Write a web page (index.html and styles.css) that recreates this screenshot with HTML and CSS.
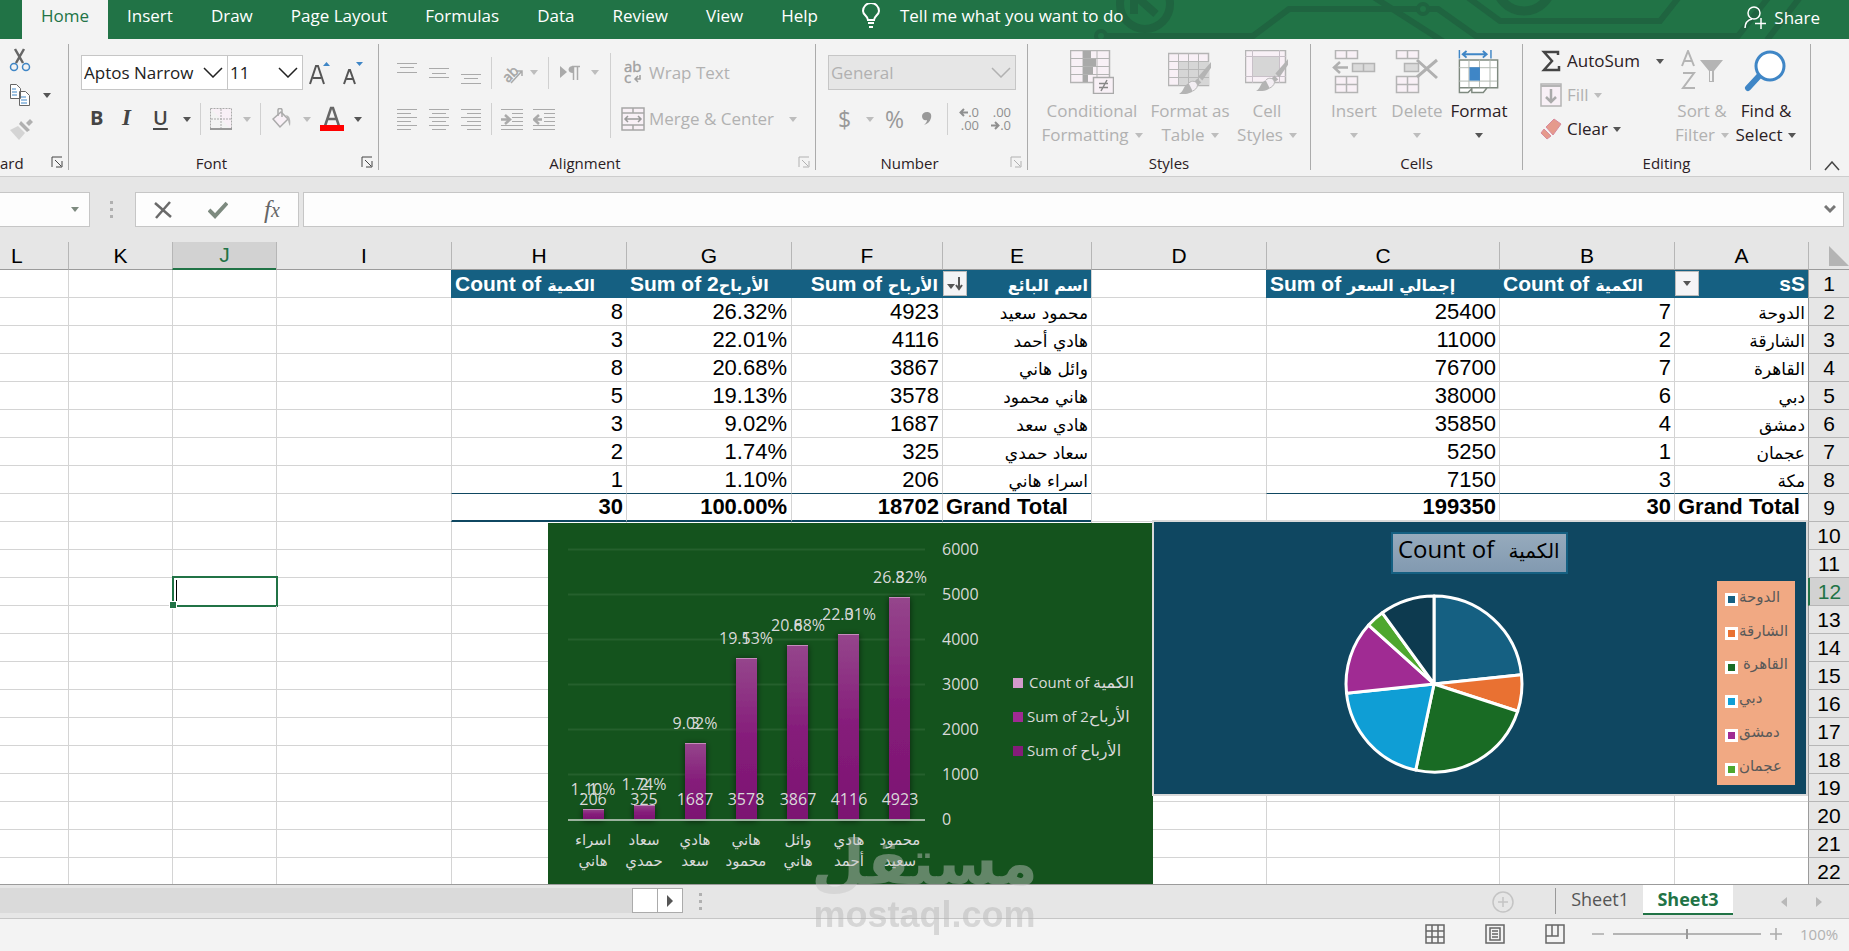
FILE: index.html
```html
<!DOCTYPE html>
<html lang="en">
<head>
<meta charset="utf-8">
<title>Sheet3 - Excel</title>
<link rel="stylesheet" href="styles.css">
</head>
<body>
<svg class="defs" aria-hidden="true">
  <symbol id="caret" viewBox="0 0 8 5"><path d="M0 0h8L4 5z" fill="currentColor"/></symbol>
  <symbol id="launch" viewBox="0 0 12 12"><path d="M1 11V1h10M4 4l6 6M11 5v6H5" fill="none" stroke="currentColor"/></symbol>
  <symbol id="chev" viewBox="0 0 20 11"><path d="M1 1l9 9 9-9" fill="none" stroke="currentColor" stroke-width="1.500"/></symbol>
  <symbol id="brush" viewBox="0 0 34 34"><path d="M33 0L20 15l4 4L33 6z" fill="#b4b4b4"/><path d="M19 17l-3 3 3 4 4-3z" fill="#b4b4b4"/><path d="M0 33c5-2 5-11 11-11 4 0 6 4 4 7-3 4-9 4-15 4z" fill="#b4b4b4"/><path d="M10 22c3-4 9-2 9 2 0 3-3 5-5 6" fill="#f3eef3" stroke="#b4b4b4"/></symbol>
</svg>

<header class="topbar">
  <svg class="circuit" width="760" height="39" viewBox="1089 0 760 39" fill="none" stroke="#1f6440" stroke-width="6" aria-hidden="true">
    <circle cx="1145" cy="4" r="25" stroke-width="8"/><path d="M1134-4v18M1138-2l18 16" stroke-width="8"/>
    <circle cx="1101" cy="36" r="5" stroke-width="4"/>
    <path d="M1106 36h147l36-27h128M1429 9h9l38 27h262l30-38M1372-4l72 46M1466-4l34 25h160l19-24M1767 40l34-44"/>
    <circle cx="1423" cy="9" r="5" stroke-width="4"/><circle cx="1524" cy="-17" r="28" stroke-width="9"/>
  </svg>
  <nav class="tabs">
    <button class="tab tab-on">Home</button><button class="tab">Insert</button><button class="tab">Draw</button><button class="tab">Page Layout</button><button class="tab">Formulas</button><button class="tab">Data</button><button class="tab">Review</button><button class="tab">View</button><button class="tab">Help</button>
  </nav>
  <button class="tell">
    <svg width="18" height="26" viewBox="0 0 18 26" fill="none" stroke="#fff" stroke-width="2"><path d="M6 17c0-4-5-5-5-9a8 8 0 0 1 16 0c0 4-5 5-5 9zM6 20h6M7 24h4"/></svg>
    Tell me what you want to do</button>
  <button class="share">
    <svg width="22" height="24" viewBox="0 0 22 24" fill="none" stroke="#fff" stroke-width="1.500"><circle cx="10" cy="7" r="6"/><path d="M1 22c0-5 3-8 7-9M17 12v11M11 17.500h11"/></svg>
    Share</button>
</header>

<section class="ribbon">
  <div class="group g-clip">
    <div class="body clip-rows">
      <button aria-label="Cut"><svg width="22" height="24" viewBox="0 0 22 24" fill="none"><path d="M6 1l8 14M15 1L7 15" stroke="#666" stroke-width="2.500"/><circle cx="5" cy="19" r="3.500" stroke="#3f86c6" stroke-width="1.500"/><circle cx="17" cy="19" r="3.500" stroke="#3f86c6" stroke-width="1.500"/></svg></button>
      <button aria-label="Copy"><svg width="22" height="24" viewBox="0 0 22 24" fill="#fff" stroke="#666"><path d="M1.500 1.500h6l4 4v10h-10zM10.500 8.500h6l4 4v10h-10z"/><path d="M3 6h4M3 9h5M3 12h5M12 14h5M12 17h6M12 20h6" stroke="#3f86c6"/></svg><svg class="c dark"><use href="#caret"/></svg></button>
      <button aria-label="Format Painter"><svg width="24" height="22" viewBox="0 0 24 22"><path d="M1 11l8-4 7 7-6 7z" fill="#d4d4d4"/><path d="M10 5l8 8 3-2-9-9zM17 4l4-4 3 3-4 4z" fill="#b0b0b0"/></svg></button>
    </div>
    <div class="foot"><span class="cut-label">ard</span><button class="launch dark" aria-label="Clipboard settings"><svg><use href="#launch"/></svg></button></div>
  </div>

  <div class="group g-font">
    <div class="body two-rows">
      <div class="row row-top">
        <label class="combo w-name"><select aria-label="Font"><option>Aptos Narrow</option></select><svg class="chev"><use href="#chev"/></svg></label>
        <label class="combo w-size"><select aria-label="Font size"><option>11</option></select><svg class="chev"><use href="#chev"/></svg></label>
        <button class="grow" aria-label="Increase font size"><svg width="22" height="24" viewBox="0 0 22 24"><path d="M1 23L7 5h2l6 18M4 17h8" fill="none" stroke="#555" stroke-width="2"/><path d="M14 5l3.500-4L21 5z" fill="#3f86c6"/></svg></button>
        <button class="grow" aria-label="Decrease font size"><svg width="22" height="24" viewBox="0 0 22 24"><path d="M2 23L7 9h1l5 14M4 18h7" fill="none" stroke="#555" stroke-width="2"/><path d="M14 1l3.500 4L21 1z" fill="#3f86c6"/></svg></button>
      </div>
      <div class="row font-row">
        <button class="b">B</button><button class="i">I</button><button class="u">U</button><svg class="c dark"><use href="#caret"/></svg><i class="sep"></i>
        <button aria-label="Borders"><svg width="22" height="22" viewBox="0 0 22 22"><path d="M.5.5h21v21M.5.5v21M11 1v20M1 11h20" fill="#f8f0f6" stroke="#aaa" stroke-dasharray="2 1"/><path d="M0 21h22" stroke="#999" stroke-width="2"/></svg></button><svg class="c"><use href="#caret"/></svg><i class="sep"></i>
        <button aria-label="Fill colour"><svg width="20" height="22" viewBox="0 0 20 22"><path d="M1 11L9 4l7 7-8 8z" fill="#f8f0f6" stroke="#aaa" stroke-width="1.500"/><path d="M6 8V2c0-2 4-2 4 0v7" fill="none" stroke="#aaa" stroke-width="1.500"/><path d="M14 7c4 1 5 5 4 11-2-3-1-5-4-11z" fill="#b4b4b4"/></svg></button><svg class="c"><use href="#caret"/></svg>
        <button aria-label="Font colour"><svg width="24" height="26" viewBox="0 0 24 26"><path d="M5 20L11 2h2l6 18M8 13h8" fill="none" stroke="#666" stroke-width="2.500"/><path d="M0 19h24v6H0z" fill="red"/></svg></button><svg class="c dark"><use href="#caret"/></svg>
      </div>
    </div>
    <div class="foot"><span>Font</span><button class="launch dark" aria-label="Font settings"><svg><use href="#launch"/></svg></button></div>
  </div>

  <div class="group g-align off">
    <div class="body align-body">
      <div class="two-rows">
        <div class="row row-top align-top">
          <button aria-label="Top align"><svg class="ln" viewBox="0 0 20 24"><path d="M0 2.500h20M3 6.500h14M0 11.500h20"/></svg></button>
          <button aria-label="Middle align"><svg class="ln" viewBox="0 0 20 24"><path d="M0 7.500h20M3 12.500h14M0 16.500h20"/></svg></button>
          <button aria-label="Bottom align"><svg class="ln" viewBox="0 0 20 24"><path d="M0 13.500h20M3 17.500h14M0 22.500h20"/></svg></button>
          <i class="sep"></i>
          <button aria-label="Orientation"><svg class="loose" width="22" height="22" viewBox="0 0 22 22"><text x="0" y="17" font-size="14" fill="#a6a6a6" stroke="#a6a6a6" stroke-width=".5" transform="rotate(-45 8 12)">ab</text><path d="M9 21L20 9M14 9h6v5" fill="none" stroke="#aaa" stroke-width="1.500"/></svg></button><svg class="c"><use href="#caret"/></svg>
          <i class="sep"></i>
          <button aria-label="Text direction"><svg width="20" height="16" viewBox="0 0 20 16"><path d="M0 1l7 6-7 6z" fill="#aaa"/><path d="M13.500 1v14M17.500 1v14M20 1.500h-8" fill="none" stroke="#aaa" stroke-width="1.500"/><path d="M13 1c-6 0-6 7 0 7z" fill="#aaa"/></svg></button><svg class="c"><use href="#caret"/></svg>
        </div>
        <div class="row align-low">
          <button aria-label="Align left"><svg class="ln" viewBox="0 0 20 24"><path d="M0 2.500h20M0 6.500h14M0 10.500h20M0 14.500h14M0 18.500h20M0 22.500h14"/></svg></button>
          <button aria-label="Centre"><svg class="ln" viewBox="0 0 20 24"><path d="M0 2.500h20M3 6.500h14M0 10.500h20M3 14.500h14M0 18.500h20M3 22.500h14"/></svg></button>
          <button aria-label="Align right"><svg class="ln" viewBox="0 0 20 24"><path d="M0 2.500h20M6 6.500h14M0 10.500h20M6 14.500h14M0 18.500h20M6 22.500h14"/></svg></button>
          <i class="sep"></i>
          <button aria-label="Decrease indent"><svg width="22" height="24" viewBox="0 0 22 24"><path d="M0 2.500h22M11 6.500h11M11 10.500h11M11 14.500h11M0 18.500h22M0 22.500h22" stroke="#aaa"/><path d="M0 12.500h8M4 8l5 4.500L4 17" fill="none" stroke="#aaa" stroke-width="2.500"/></svg></button>
          <button aria-label="Increase indent"><svg width="22" height="24" viewBox="0 0 22 24"><path d="M0 2.500h22M11 6.500h11M11 10.500h11M11 14.500h11M0 18.500h22M0 22.500h22" stroke="#aaa"/><path d="M9 12.500H2M6 8l-5 4.500L6 17" fill="none" stroke="#aaa" stroke-width="2.500"/></svg></button>
        </div>
      </div>
      <i class="sep sep-tall"></i>
      <div class="two-rows wrap-col">
        <button class="row row-top"><svg class="loose" width="24" height="26" viewBox="0 0 24 26"><text x="3" y="12" font-size="15" fill="#a0a0a0" stroke="#a0a0a0" stroke-width=".4">ab</text><text x="3" y="23" font-size="15" fill="#a0a0a0" stroke="#a0a0a0" stroke-width=".4">c</text><path d="M19 15v4h-5M17 16l-3 3 3 3" fill="none" stroke="#a0a0a0" stroke-width="1.500"/></svg>Wrap Text</button>
        <button class="row"><svg width="24" height="24" viewBox="0 0 24 24"><path d="M1 1h22v22H1zM1 6h22M1 18h22M12 1v5M12 18v5" fill="#f8f0f6" stroke="#a6a6a6" stroke-width="1.500"/><path d="M4 12h16M7 9l-3 3 3 3M17 9l3 3-3 3" fill="none" stroke="#999" stroke-width="1.500"/></svg>Merge &amp; Center<svg class="c merge-c"><use href="#caret"/></svg></button>
      </div>
    </div>
    <div class="foot"><span>Alignment</span><button class="launch" aria-label="Alignment settings"><svg><use href="#launch"/></svg></button></div>
  </div>

  <div class="group g-num off">
    <div class="body two-rows">
      <div class="row row-top"><label class="combo combo-off"><select aria-label="Number format"><option>General</option></select><svg class="chev"><use href="#chev"/></svg></label></div>
      <div class="row num-row">
        <button class="sym">$</button><svg class="c"><use href="#caret"/></svg><button class="sym">%</button>
        <button aria-label="Comma style"><svg width="10" height="14" viewBox="0 0 10 14"><path d="M5 0c3 0 5 2 4 6-1 4-4 6-7 7 2-2 3-3 3-5-3 1-5-1-5-4 0-2 2-4 5-4z" fill="#999"/></svg></button>
        <i class="sep"></i>
        <button class="dec"><span><svg width="9" height="9" viewBox="0 0 9 9"><path d="M9 4.500H2M5 1L1.500 4.500 5 8" fill="none" stroke="currentColor" stroke-width="2"/></svg>.0</span><span>.00</span></button>
        <button class="dec"><span>.00</span><span><svg width="9" height="9" viewBox="0 0 9 9"><path d="M0 4.500h7M4 1l3.500 3.500L4 8" fill="none" stroke="currentColor" stroke-width="2"/></svg>.0</span></button>
      </div>
    </div>
    <div class="foot"><span>Number</span><button class="launch" aria-label="Number settings"><svg><use href="#launch"/></svg></button></div>
  </div>

  <div class="group g-styles off">
    <div class="body bigs styles-cols">
      <button class="big"><svg width="44" height="44" viewBox="0 0 44 44"><path d="M.5.5h39v32H.5z" fill="#f8f0f6" stroke="#b4b4b4" stroke-width="1.500"/><path d="M13 0v33M27 0v33M0 8.500h40M0 16.500h40M0 24.500h40" stroke="#b4b4b4"/><path d="M13 1h8v7h-8zM13 9h13v7H13zM13 17h10v7H13zM13 25h5v7h-5z" fill="#a9a9a9"/><path d="M23.500 27.500h20v16h-20z" fill="#f8f0f6" stroke="#aaa" stroke-width="1.500"/><path d="M29 33.500h9M29 37.500h9M37 30l-6 11" stroke="#888" stroke-width="1.500"/></svg>Conditional<span>Formatting <svg class="c"><use href="#caret"/></svg></span></button>
      <button class="big"><svg width="44" height="44" viewBox="0 0 44 44"><path d="M.5 3.500h40v32H.5z" fill="#f8f0f6" stroke="#b4b4b4" stroke-width="1.500"/><path d="M10 11h31v24H10z" fill="#d6d6d6"/><path d="M10.500 3v33M20.500 3v33M30.500 3v33M0 11.500h41M0 19.500h41M0 27.500h41" stroke="#b8b8b8"/><use href="#brush" x="11" y="12" width="33" height="33"/></svg>Format as<span>Table <svg class="c"><use href="#caret"/></svg></span></button>
      <button class="big"><svg width="44" height="44" viewBox="0 0 44 44"><path d="M.5.5h40v32H.5z" fill="#f8f0f6" stroke="#b4b4b4" stroke-width="1.500"/><path d="M8 7h26v19H8z" fill="#d6d6d6"/><path d="M7.500 0v33M34.500 0v33M0 6.500h41M0 26.500h41" stroke="#c8c0c8"/><use href="#brush" x="11" y="9" width="33" height="33"/></svg>Cell<span>Styles <svg class="c"><use href="#caret"/></svg></span></button>
    </div>
    <div class="foot"><span>Styles</span></div>
  </div>

  <div class="group g-cells">
    <div class="body bigs cells-cols">
      <button class="big off"><svg width="44" height="44" viewBox="0 0 44 44"><path d="M3.500.500h22v8h-22zM14.500.5v8M3.500 26.500h22v16h-22zM14.500 26.500v16M3.500 34.500h22" fill="#f8f0f6" stroke="#b4b4b4" stroke-width="1.500"/><path d="M20.500 13.500h22v8h-22zM31.500 13.500v8" fill="#dadada" stroke="#b4b4b4" stroke-width="1.500"/><path d="M16 17.500H2M8 12l-6 5.500 6 5.500" fill="none" stroke="#b0b0b0" stroke-width="2.500"/></svg>Insert<span><svg class="c"><use href="#caret"/></svg></span></button>
      <button class="big off"><svg width="44" height="44" viewBox="0 0 44 44"><path d="M1.500.500h22v8h-22zM12.500.5v8M1.500 26.500h22v16h-22zM12.500 26.500v16M1.500 34.500h22" fill="#f8f0f6" stroke="#b4b4b4" stroke-width="1.500"/><path d="M9.500 13.500h14v8h-14z" fill="#dadada" stroke="#b4b4b4" stroke-width="1.500"/><path d="M22 10l20 18M42 10L22 27" stroke="#b0b0b0" stroke-width="3"/></svg>Delete<span><svg class="c"><use href="#caret"/></svg></span></button>
      <button class="big"><svg width="44" height="46" viewBox="0 0 44 46"><path d="M1.500 10.500h40v29h-40zM1.500 39.500v5h9l4-4v4h12l4-5" fill="#fff" stroke="#7f8a80" stroke-width="1.500"/><path d="M11.500 10v29M22.500 10v29M33.500 10v29M1 18.500h40M1 32.500h40" stroke="#b0b8b0"/><path d="M12 18h11v14H12z" fill="#3f86c6"/><path d="M1.500 0v9M34.500 0v9" stroke="#3f86c6" stroke-width="1.500"/><path d="M5 4.500h25M9 1L5 4.500 9 8M26 1l4 3.500L26 8" fill="none" stroke="#3f86c6" stroke-width="2"/></svg>Format<span class="dark"><svg class="c"><use href="#caret"/></svg></span></button>
    </div>
    <div class="foot"><span>Cells</span></div>
  </div>

  <div class="group g-edit">
    <div class="body edit-body">
      <div class="edit-list">
        <button><svg width="22" height="22" viewBox="0 0 22 22"><path d="M18 5V2H4l8 9-8 9h15v-4" fill="none" stroke="#444" stroke-width="2.500"/></svg>AutoSum<svg class="c dark auto-c"><use href="#caret"/></svg></button>
        <button class="off"><svg width="22" height="24" viewBox="0 0 22 24"><path d="M1 1h20v22H1z" fill="#f8f0f6" stroke="#b4b4b4" stroke-width="1.500"/><path d="M1 3h20" stroke="#b4b4b4" stroke-width="2"/><path d="M11 6v13M6 14l5 5 5-5" fill="none" stroke="#aaa" stroke-width="2.500"/></svg>Fill<svg class="c"><use href="#caret"/></svg></button>
        <button><svg width="22" height="22" viewBox="0 0 22 22"><path d="M6 9l8-8 7 5-8 11z" fill="#e59a8c" stroke="#d98a9c"/><path d="M4 11l7 7-4 3-6-6z" fill="#e59a8c" stroke="#d98a9c"/></svg>Clear<svg class="c dark"><use href="#caret"/></svg></button>
      </div>
      <button class="big off"><svg width="44" height="44" viewBox="0 0 44 44"><path d="M2 16L8 1l6 15M4 11h8M3 23h11L3 38h12" fill="none" stroke="#b4b4b4" stroke-width="2"/><path d="M20 10h23l-9 11v11h-5V21z" fill="#b4b4b4"/><path d="M30 21h2v10h-2z" fill="#f3f3f3"/></svg>Sort &amp;<span>Filter <svg class="c"><use href="#caret"/></svg></span></button>
      <button class="big"><svg width="44" height="44" viewBox="0 0 44 44"><path d="M16 25L4 38" stroke="#3f86c6" stroke-width="6" stroke-linecap="round"/><circle cx="26" cy="16" r="14" fill="#fff" stroke="#3f86c6" stroke-width="3"/></svg>Find &amp;<span>Select <svg class="c dark"><use href="#caret"/></svg></span></button>
    </div>
    <div class="foot"><span>Editing</span></div>
  </div>
  <button class="collapse" aria-label="Collapse ribbon"><svg width="16" height="10" viewBox="0 0 16 10"><path d="M1 9l7-8 7 8" fill="none" stroke="#444" stroke-width="1.500"/></svg></button>
</section>

<section class="formula">
  <label class="namebox"><input type="text" aria-label="Name box"><svg class="c"><use href="#caret"/></svg></label>
  <span class="dots"><i></i><i></i><i></i></span>
  <div class="fx-tools">
    <button aria-label="Cancel"><svg width="18" height="18" viewBox="0 0 18 18"><path d="M1 2l16 14M16 1L2 17" stroke="#6a6a6a" stroke-width="2.500"/></svg></button>
    <button aria-label="Enter"><svg width="20" height="18" viewBox="0 0 20 18"><path d="M1 9l6 6L19 2" fill="none" stroke="#7d8a7f" stroke-width="4"/></svg></button>
    <button class="fx" aria-label="Insert function">f<small>x</small></button>
  </div>
  <div class="fx-input"><input type="text" aria-label="Formula"><svg width="12" height="9" viewBox="0 0 12 9"><path d="M1 1l5 5 5-5" fill="none" stroke="#777" stroke-width="3"/></svg></div>
</section>

<main class="sheet">
  <table class="grid" dir="rtl">
    <colgroup><col class="w-head"><col class="w-a"><col class="w-b"><col class="w-c"><col class="w-b"><col class="w-e"><col class="w-f"><col class="w-g"><col class="w-b"><col class="w-b"><col class="w-j"><col class="w-j"><col></colgroup>
    <thead><tr><th class="corner"><svg width="20" height="20" viewBox="0 0 20 20"><path d="M0 0v20h20z" fill="#b4b4b4"/></svg></th><th>A</th><th>B</th><th>C</th><th>D</th><th>E</th><th>F</th><th>G</th><th>H</th><th>I</th><th class="sel">J</th><th>K</th><th class="last">L</th></tr></thead>
    <tbody>
      <tr class="heads"><th>1</th><td class="hd">sS<button class="filter" aria-label="Filter"><svg class="c"><use href="#caret"/></svg></button></td><td class="hd lt" dir="ltr">Count of <bdi>الكمية</bdi></td><td class="hd lt" dir="ltr">Sum of <bdi>إجمالي السعر</bdi></td><td></td><td class="hd"><bdi>اسم البائع</bdi><button class="filter" aria-label="Sorted"><svg width="16" height="14" viewBox="0 0 16 14"><path d="M0 7h8l-4 5z" fill="#555"/><path d="M12 0v12M9 8l3 4 3-4" fill="none" stroke="#555" stroke-width="2"/></svg></button></td><td class="hd rt" dir="ltr">Sum of <bdi>الأرباح</bdi></td><td class="hd lt" dir="ltr">Sum of <span class="ar">الأرباح</span>2</td><td class="hd lt" dir="ltr">Count of <bdi>الكمية</bdi></td><td></td><td></td><td></td><td></td></tr>
      <tr><th>2</th><td><bdi>الدوحة</bdi></td><td>7</td><td>25400</td><td></td><td><bdi>محمود سعيد</bdi></td><td>4923</td><td dir="ltr" class="rt">26.32%</td><td>8</td><td></td><td></td><td></td><td></td></tr>
      <tr><th>3</th><td><bdi>الشارقة</bdi></td><td>2</td><td>11000</td><td></td><td><bdi>هادي أحمد</bdi></td><td>4116</td><td dir="ltr" class="rt">22.01%</td><td>3</td><td></td><td></td><td></td><td></td></tr>
      <tr><th>4</th><td><bdi>القاهرة</bdi></td><td>7</td><td>76700</td><td></td><td><bdi>وائل هاني</bdi></td><td>3867</td><td dir="ltr" class="rt">20.68%</td><td>8</td><td></td><td></td><td></td><td></td></tr>
      <tr><th>5</th><td><bdi>دبي</bdi></td><td>6</td><td>38000</td><td></td><td><bdi>هاني محمود</bdi></td><td>3578</td><td dir="ltr" class="rt">19.13%</td><td>5</td><td></td><td></td><td></td><td></td></tr>
      <tr><th>6</th><td><bdi>دمشق</bdi></td><td>4</td><td>35850</td><td></td><td><bdi>هادي سعد</bdi></td><td>1687</td><td dir="ltr" class="rt">9.02%</td><td>3</td><td></td><td></td><td></td><td></td></tr>
      <tr><th>7</th><td><bdi>عجمان</bdi></td><td>1</td><td>5250</td><td></td><td><bdi>سعاد حمدي</bdi></td><td>325</td><td dir="ltr" class="rt">1.74%</td><td>2</td><td></td><td></td><td></td><td></td></tr>
      <tr class="pre-total"><th>8</th><td class="t"><bdi>مكة</bdi></td><td class="t">3</td><td class="t">7150</td><td></td><td class="t"><bdi>اسراء هاني</bdi></td><td class="t">206</td><td dir="ltr" class="t rt">1.10%</td><td class="t">1</td><td></td><td></td><td></td><td></td></tr>
      <tr class="total"><th>9</th><td class="t lt" dir="ltr">Grand Total</td><td class="t">30</td><td class="t">199350</td><td></td><td class="t lt" dir="ltr">Grand Total</td><td class="t">18702</td><td dir="ltr" class="t rt">100.00%</td><td class="t">30</td><td></td><td></td><td></td><td></td></tr>
      <tr><th>10</th><td></td><td></td><td></td><td></td><td></td><td></td><td></td><td></td><td></td><td></td><td></td><td></td></tr>
      <tr><th>11</th><td></td><td></td><td></td><td></td><td></td><td></td><td></td><td></td><td></td><td></td><td></td><td></td></tr>
      <tr><th class="sel">12</th><td></td><td></td><td></td><td></td><td></td><td></td><td></td><td></td><td></td><td class="active"><span class="cursor"></span></td><td></td><td></td></tr>
      <tr><th>13</th><td></td><td></td><td></td><td></td><td></td><td></td><td></td><td></td><td></td><td></td><td></td><td></td></tr>
      <tr><th>14</th><td></td><td></td><td></td><td></td><td></td><td></td><td></td><td></td><td></td><td></td><td></td><td></td></tr>
      <tr><th>15</th><td></td><td></td><td></td><td></td><td></td><td></td><td></td><td></td><td></td><td></td><td></td><td></td></tr>
      <tr><th>16</th><td></td><td></td><td></td><td></td><td></td><td></td><td></td><td></td><td></td><td></td><td></td><td></td></tr>
      <tr><th>17</th><td></td><td></td><td></td><td></td><td></td><td></td><td></td><td></td><td></td><td></td><td></td><td></td></tr>
      <tr><th>18</th><td></td><td></td><td></td><td></td><td></td><td></td><td></td><td></td><td></td><td></td><td></td><td></td></tr>
      <tr><th>19</th><td></td><td></td><td></td><td></td><td></td><td></td><td></td><td></td><td></td><td></td><td></td><td></td></tr>
      <tr><th>20</th><td></td><td></td><td></td><td></td><td></td><td></td><td></td><td></td><td></td><td></td><td></td><td></td></tr>
      <tr><th>21</th><td></td><td></td><td></td><td></td><td></td><td></td><td></td><td></td><td></td><td></td><td></td><td></td></tr>
      <tr><th>22</th><td></td><td></td><td></td><td></td><td></td><td></td><td></td><td></td><td></td><td></td><td></td><td></td></tr>
    </tbody>
  </table>

  <svg class="chart chart-bars" width="605" height="380" viewBox="0 0 605 380" role="img" aria-label="Sales by seller">
    <defs>
      <linearGradient id="bar" x1="0" y1="0" x2="0" y2="1"><stop offset="0" stop-color="#95468c"/><stop offset=".5" stop-color="#851c7a"/><stop offset="1" stop-color="#7c1572"/></linearGradient>
      <filter id="sh" x="-50%" y="-20%" width="200%" height="140%"><feDropShadow dx="0" dy="1" stdDeviation="3" flood-opacity=".6"/></filter>
    </defs>
    <rect width="605" height="380" fill="#14531d"/>
    <path d="M20 26.500h357M20 71.500h357M20 116.500h357M20 161.500h357M20 206.500h357M20 251.500h357" stroke="#25602d" stroke-width="2"/>
    <g fill="url(#bar)" filter="url(#sh)"><rect x="35" y="286" width="21" height="11"/><rect x="86" y="282" width="21" height="15"/><rect x="137" y="220" width="21" height="77"/><rect x="188" y="135" width="21" height="162"/><rect x="239" y="122" width="21" height="175"/><rect x="290" y="111" width="21" height="186"/><rect x="341" y="74" width="21" height="223"/></g>
    <path d="M35 286.500h21M86 282.500h21M137 220.500h21M188 135.500h21M239 122.500h21M290 111.500h21M341 74.500h21" stroke="#c58cbc"/>
    <path d="M20 297h357" stroke="#9cb39f" stroke-width="2"/>
    <g class="lab num">
      <text x="394" y="32">6000</text><text x="394" y="77">5000</text><text x="394" y="122">4000</text><text x="394" y="167">3000</text><text x="394" y="212">2000</text><text x="394" y="257">1000</text><text x="394" y="302">0</text>
    </g>
    <g class="lab num mid">
      <text x="45" y="272">1.10%</text><text x="45" y="272">1</text><text x="96" y="267">1.74%</text><text x="96" y="267">2</text><text x="147" y="206">9.02%</text><text x="147" y="206">3</text><text x="198" y="121">19.13%</text><text x="198" y="121">5</text><text x="250" y="108">20.68%</text><text x="250" y="108">8</text><text x="301" y="97">22.01%</text><text x="301" y="97">3</text><text x="352" y="60">26.32%</text><text x="352" y="60">8</text>
      <text x="45" y="282">206</text><text x="96" y="282">325</text><text x="147" y="282">1687</text><text x="198" y="282">3578</text><text x="250" y="282">3867</text><text x="301" y="282">4116</text><text x="352" y="282">4923</text>
    </g>
    <g class="lab mid cat">
      <text x="45" y="322">اسراء</text><text x="45" y="343">هاني</text><text x="96" y="322">سعاد</text><text x="96" y="343">حمدي</text><text x="147" y="322">هادي</text><text x="147" y="343">سعد</text><text x="198" y="322">هاني</text><text x="198" y="343">محمود</text><text x="250" y="322">وائل</text><text x="250" y="343">هاني</text><text x="301" y="322">هادي</text><text x="301" y="343">أحمد</text><text x="352" y="322">محمود</text><text x="352" y="343">سعيد</text>
    </g>
    <rect x="465" y="155" width="10" height="10" fill="#d39acb"/><rect x="465" y="189" width="10" height="10" fill="#a02b93"/><rect x="465" y="223" width="10" height="10" fill="#851c7a"/>
    <g class="lab"><text x="481" y="165">Count of <tspan class="ar">الكمية</tspan></text><text x="479" y="199">Sum of <tspan class="ar">الأرباح</tspan>2</text><text x="479" y="233">Sum of <tspan class="ar">الأرباح</tspan></text></g>
  </svg>

  <svg class="chart chart-pie" width="656" height="276" viewBox="0 0 656 276" role="img" aria-label="Count by city">
    <defs><linearGradient id="tb" x1="0" y1="0" x2="0" y2="1"><stop offset="0" stop-color="#97abbd"/><stop offset="1" stop-color="#8199b0"/></linearGradient></defs>
    <rect x="1" y="1" width="654" height="274" fill="#0f4761" stroke="#d9d9d9" stroke-width="2"/>
    <rect x="240" y="13" width="175" height="40" fill="url(#tb)" stroke="#156082" stroke-width="2"/>
    <text class="title" x="246" y="38">Count of <tspan class="ar" dx="8">الكمية</tspan></text>
    <g stroke="#fff" stroke-width="3" stroke-linejoin="round" transform="translate(0 -1)">
      <path d="M282 165V77a88 88 0 0 1 87.500 78.800z" fill="#156082"/>
      <path d="M282 165l87.500-9.200a88 88 0 0 1-3.800 36.400z" fill="#e97132"/>
      <path d="M282 165l83.700 27.200a88 88 0 0 1-102 58.900z" fill="#196b24"/>
      <path d="M282 165l-18.300 86.100a88 88 0 0 1-69.200-76.900z" fill="#0f9ed5"/>
      <path d="M282 165l-87.500 9.200a88 88 0 0 1 22.100-68.100z" fill="#a02b93"/>
      <path d="M282 165l-65.400-58.900a88 88 0 0 1 13.700-12.300z" fill="#4ea72e"/>
      <path d="M282 165l-51.700-71.200a88 88 0 0 1 51.700-16.800z" fill="#0d3a4f"/>
    </g>
    <rect x="565" y="61" width="78" height="204" fill="#f1a983"/>
    <g stroke="#fff" stroke-width="3"><rect x="574.500" y="74.500" width="10" height="10" fill="#156082"/><rect x="574.500" y="108.500" width="10" height="10" fill="#e97132"/><rect x="574.500" y="142.500" width="10" height="10" fill="#196b24"/><rect x="574.500" y="176.500" width="10" height="10" fill="#0f9ed5"/><rect x="574.500" y="210.500" width="10" height="10" fill="#a02b93"/><rect x="574.500" y="244.500" width="10" height="10" fill="#4ea72e"/></g>
    <g class="pie-leg"><text x="587" y="82">الدوحة</text><text x="587" y="116">الشارقة</text><text x="591" y="149">القاهرة</text><text x="587" y="183">دبي</text><text x="587" y="217">دمشق</text><text x="587" y="251">عجمان</text></g>
  </svg>
</main>

<footer class="sheetbar">
  <div class="track"></div><div class="thumb"></div><button class="arrow" aria-label="Scroll right"><svg width="6" height="12" viewBox="0 0 6 12"><path d="M0 0v12l6-6z" fill="#555"/></svg></button>
  <span class="dots"><i></i><i></i><i></i></span>
  <span class="push"></span>
  <button class="add" aria-label="New sheet"><svg width="22" height="22" viewBox="0 0 22 22" fill="none" stroke="#c4c4c4" stroke-width="1.500"><circle cx="11" cy="11" r="10"/><path d="M6 11h10M11 6v10"/></svg></button>
  <i class="bar-sep"></i>
  <button class="st">Sheet1</button><button class="st st-on">Sheet3</button>
  <div class="navs"><button aria-label="Previous"><svg width="6" height="10" viewBox="0 0 6 10"><path d="M6 0v10L0 5z" fill="#b8b8b8"/></svg></button><button aria-label="Next"><svg width="6" height="10" viewBox="0 0 6 10"><path d="M0 0v10l6-5z" fill="#b8b8b8"/></svg></button></div>
</footer>
<div class="status">
  <button aria-label="Normal"><svg width="20" height="20" viewBox="0 0 20 20" fill="none" stroke="#666" stroke-width="1.500"><path d="M1 1h18v18H1zM7 1v18M13 1v18M1 7h18M1 13h18"/></svg></button>
  <button aria-label="Page layout"><svg width="20" height="20" viewBox="0 0 20 20" fill="none" stroke="#666" stroke-width="1.500"><path d="M1 1h18v18H1zM5 4h10v12H5zM7 7h6M7 10h6M7 13h6"/></svg></button>
  <button aria-label="Page break"><svg width="20" height="20" viewBox="0 0 20 20" fill="none" stroke="#666" stroke-width="1.500"><path d="M1 1h18v18H1zM1 12h12V1M7 1v11"/></svg></button>
  <div class="zoom"><button aria-label="Zoom out"><svg width="12" height="12" viewBox="0 0 12 12"><path d="M0 6h12" stroke="#aaa" stroke-width="1.500"/></svg></button><input type="range" aria-label="Zoom" value="50"><button aria-label="Zoom in"><svg width="12" height="12" viewBox="0 0 12 12"><path d="M0 6h12M6 0v12" stroke="#aaa" stroke-width="1.500"/></svg></button><span>100%</span></div>
</div>
<div class="mark"><b class="mark-ar">مستقل</b><b class="mark-en">mostaql.com</b></div>
</body>
</html>
```
FILE: styles.css
```css
* { box-sizing: border-box; }
body { margin: 0; height: 100vh; display: flex; flex-direction: column; position: relative; overflow: hidden; background: #e6e6e6; font: 17px/24px "Open Sans", "Noto Sans", sans-serif; color: #2b2024; }
button { font: inherit; color: inherit; background: none; border: 0; padding: 0; margin: 0; display: flex; align-items: center; white-space: nowrap; }
input, select { font: inherit; color: inherit; border: 0; background: none; padding: 0; margin: 0; min-width: 0; outline: 0; }
svg { display: block; flex: none; }
.loose { overflow: visible; }
.defs { position: absolute; width: 0; height: 0; }
.c { width: 8px; height: 5px; color: #bdbdbd; }
.dark, .dark .c { color: #555; }
.off { color: #b1b1b1; }

/* title strip */
.topbar { position: relative; flex: none; height: 39px; display: flex; background: #217346; color: #fff; overflow: hidden; }
.circuit { position: absolute; right: 0; top: 0; }
.tabs { display: flex; padding-left: 22px; }
.tab { padding: 0 19px 7px; }
.tab-on { background: #f3f3f3; color: #217346; }
.tell { position: relative; gap: 20px; padding: 0 0 7px 25px; }
.share { position: relative; gap: 8px; margin-left: auto; padding: 0 29px 4px 0; }

/* ribbon */
.ribbon { flex: none; display: flex; height: 138px; padding-top: 5px; background: #f3f3f3; border-bottom: 1px solid #cdcdcd; }
.group { flex: none; display: flex; flex-direction: column; height: 126px; border-right: 1px solid #ababab; }
.body { flex: 1; }
.foot { display: flex; align-items: center; height: 20px; font-size: 15px; line-height: 20px; color: #2b2024; margin-bottom: -4px; }
.foot span { flex: 1; text-align: center; margin-top: -2px; }
.foot .cut-label { text-align: left; }
.launch { width: 24px; padding-left: 7px; margin-top: -4px; color: #b1b1b1; }
.launch.dark { color: #444; }
.launch svg { width: 12px; height: 12px; }
.g-clip { width: 69px; }
.g-font { width: 310px; }
.g-align { width: 437px; }
.g-num { width: 212px; }
.g-styles { width: 283px; }
.g-cells { width: 212px; }
.g-edit { width: 288px; }
.clip-rows { display: flex; flex-direction: column; gap: 11px; padding: 4px 0 0 9px; }
.clip-rows button { gap: 12px; height: 24px; }
.two-rows { display: flex; flex-direction: column; gap: 12px; padding-top: 11px; }
.row { display: flex; align-items: center; height: 34px; }
.row-top { height: 35px; }
.g-font .body { padding-left: 12px; }
.combo { display: flex; align-items: center; position: relative; height: 35px; border: 1px solid #c6c6c6; background: #fff; color: #222; }
.combo select { appearance: none; flex: 1; width: 100%; height: 100%; padding-left: 2px; }
.combo .chev { position: absolute; right: 4px; width: 20px; height: 11px; pointer-events: none; }
.combo-off { width: 188px; background: #e6e6e6; color: #b1b1b1; }
.w-name { width: 147px; }
.w-size { width: 76px; margin-left: -1px; }
.grow { margin-left: 6px; width: 27px; }
.sep { width: 1px; height: 32px; background: #d0d0d0; justify-self: start; }
.sep-tall { height: 85px; margin-top: 9px; }
.font-row { display: grid; grid-template-columns: 32px 31px 39px 17px 10px 33px 17px 12px 31px 17px 34px 8px; align-items: center; }
.b, .i, .u { font-size: 20px; color: #444; padding: 0 0 3px 9px; }
.b { font-weight: 700; }
.i { font-family: "Liberation Serif", serif; font-style: italic; font-weight: 700; font-size: 23px; }
.u { font-weight: 600; text-decoration: underline; text-underline-offset: 3px; }
.align-body { display: flex; }
.align-body .two-rows { width: 231px; padding-left: 18px; }
.align-body .wrap-col { padding-left: 10px; width: auto; }
.wrap-col button { gap: 4px; }
.merge-c { margin-left: 11px; }
.ln { width: 20px; height: 24px; stroke: #aaa; }
.align-top { display: grid; grid-template-columns: 32px 32px 30px 11px 28px 18px 12px 31px 8px; }
.align-low { display: grid; grid-template-columns: 32px 32px 30px 10px 32px 32px; }
.g-num .body { padding-left: 12px; }
.num-row { display: grid; grid-template-columns: 38px 17px 39px 25px 10px 32px 24px; }
.sym { font-size: 23px; color: #999; padding-left: 10px; }
.c + .sym { padding-left: 2px; }
.dec { flex-direction: column; align-items: flex-end; width: 22px; font-size: 13px; line-height: 13px; color: #8f8f8f; }
.dec span { display: flex; align-items: center; }
.bigs { display: grid; padding-top: 6px; }
.styles-cols { grid-template-columns: 120px 76px 78px; padding-left: 4px; }
.cells-cols { grid-template-columns: 66px 60px 64px; padding-left: 10px; }
.big { flex-direction: column; align-items: center; justify-content: flex-start; height: 97px; }
.big > svg { height: 44px; margin-bottom: 5px; }
.big span { display: flex; align-items: center; justify-content: center; gap: 6px; height: 24px; }
.edit-body { display: flex; padding-left: 17px; }
.edit-list { width: 127px; display: flex; flex-direction: column; gap: 10px; padding-top: 5px; }
.edit-list button { gap: 5px; height: 24px; }
.auto-c { margin-left: 11px; }
.edit-body .big { margin-top: 6px; width: 70px; }
.edit-body .big + .big { width: 58px; }
.collapse { align-self: flex-end; margin: 0 9px 5px auto; }

/* formula bar */
.formula { flex: none; display: flex; height: 65px; padding: 15px 5px 15px 0; }
.namebox, .fx-tools, .fx-input { display: flex; align-items: center; height: 35px; background: #fdfdfd; border: 1px solid #c6c6c6; }
.namebox { width: 90px; border-left: 0; padding-right: 10px; }
.namebox .c { color: #7d8a7f; }
.namebox input, .fx-input input { flex: 1; }
.dots { display: flex; flex-direction: column; justify-content: center; gap: 4px; }
.dots i { width: 3px; height: 3px; background: #b0b0b0; }
.formula .dots { margin: 0 22px 0 20px; }
.fx-tools { width: 164px; margin-right: 4px; padding-left: 18px; gap: 36px; }
.fx { font-family: "Liberation Serif", serif; font-style: italic; font-size: 25px; color: #666; }
.fx small { font-size: 20px; }
.fx-input { flex: 1; padding-right: 7px; }

/* worksheet */
.sheet { flex: 1; min-height: 0; position: relative; overflow: hidden; background: #fff; font: 21px/26px "Liberation Sans", Arial, sans-serif; color: #000; }
.grid { width: 100%; table-layout: fixed; border-collapse: separate; border-spacing: 0; }
.w-head { width: 41px; }
.w-a { width: 134px; }
.w-b { width: 175px; }
.w-c { width: 233px; }
.w-e { width: 149px; }
.w-f { width: 151px; }
.w-g { width: 165px; }
.w-j { width: 104px; }
.grid tr { height: 28px; }
.grid th, .grid td { height: 28px; padding: 0 3px 0 4px; border-bottom: 1px solid #d4d4d4; border-left: 1px solid #d4d4d4; text-align: right; white-space: nowrap; position: relative; line-height: 26px; }
.grid td { font-size: 22px; }
.grid th { background: #e6e6e6; font-weight: 400; text-align: center; padding: 0; border-color: #b6b6b6; }
.grid tbody th { border-left-color: #9b9b9b; }
.grid thead th { border-bottom-color: #9b9b9b; }
.grid .last { text-align: left; padding-left: 11px; }
.grid th:last-child, .grid td:last-child { border-left: 0; }
.grid .corner svg { margin-left: 3px; }
.grid thead .corner { border-left-color: #b6b6b6; }
.grid thead .sel { background: #d2d2d2; color: #217346; border-bottom: 2px solid #217346; }
.grid tbody .sel { background: #d2d2d2; color: #217346; border-left: 2px solid #217346; }
.grid .lt { text-align: left; }
.grid .rt { text-align: right; }
.grid .hd { background: #156082; border-color: #156082; color: #fff; font-size: 21px; font-weight: 700; }
.grid .pre-total .t { border-bottom-color: #0f4761; }
.grid .total .t { font-weight: 700; border-bottom: 2px solid #0f4761; }
bdi, .ar { font-family: "DejaVu Sans", sans-serif; font-size: 17px; line-height: 20px; }
.hd bdi, .hd .ar { font-size: 16px; }
.filter { position: absolute; left: 0; top: 1px; width: 24px; height: 25px; justify-content: center; background: #f4f4f6; border: 1px solid #bbb; }
.filter .c { color: #555; }
.active::after { content: ""; position: absolute; inset: -2px -2px -2px -1px; border: 2px solid #217346; }
.active::before { content: ""; position: absolute; left: -3px; bottom: -3px; width: 6px; height: 6px; background: #217346; z-index: 1; outline: 1px solid #fff; }
.cursor { position: absolute; left: 3px; top: 2px; width: 1px; height: 25px; background: #000; }

.chart { position: absolute; }
.chart-bars { right: 696px; top: 281px; }
.chart-pie { right: 41px; top: 278px; }
.lab { font: 15px "Open Sans", sans-serif; fill: #d9d9d9; }
.num { font-size: 16px; }
.mid { text-anchor: middle; }
.cat { font-family: "DejaVu Sans", sans-serif; }
.lab .ar { font-size: 16px; }
.title { font: 24px "Open Sans", sans-serif; fill: #000; }
.title .ar { font-size: 20px; }
.pie-leg { font: 15px "DejaVu Sans", sans-serif; fill: #595959; }

/* sheet tabs */
.sheetbar { flex: none; display: flex; height: 35px; border-top: 1px solid #9b9b9b; border-bottom: 1px solid #c6c6c6; }
.track { flex: none; width: 632px; height: 25px; margin-top: 3px; background: #dadada; }
.thumb, .arrow { height: 25px; margin-top: 3px; width: 26px; background: #fff; border: 1px solid #ababab; }
.arrow { justify-content: center; margin-left: -1px; }
.sheetbar .dots { margin-left: 16px; }
.push { flex: 1; }
.bar-sep { width: 1px; height: 26px; margin: 3px 0 0 41px; background: #999; }
.st { font-size: 18px; padding: 0 14px 3px 15px; height: 30px; color: #555; }
.st-on { justify-content: center; width: 90px; background: #fff; color: #217346; font-weight: 700; border-bottom: 2px solid #217346; padding: 0 0 1px; }
.navs { display: flex; gap: 29px; padding: 0 27px 0 48px; }

/* status strip */
.status { flex: none; display: flex; justify-content: flex-end; align-items: center; height: 32px; padding: 0 8px 2px 0; background: #f3f3f3; gap: 40px; }
.zoom { display: flex; align-items: center; gap: 9px; margin-left: -13px; font-size: 15px; color: #b1b1b1; }
.zoom span { width: 41px; margin-left: 9px; }
.zoom input { appearance: none; width: 148px; height: 12px; background: linear-gradient(#b4b4b4, #b4b4b4) center / 100% 2px no-repeat; }
.zoom input::-webkit-slider-thumb { appearance: none; width: 2px; height: 10px; background: #999; }

.mark { position: absolute; left: 50%; bottom: 16px; transform: translateX(-50%); display: flex; flex-direction: column; align-items: center; color: #c4c4c4; opacity: .45; pointer-events: none; }
.mark-ar { font: 700 62px/64px "DejaVu Sans", sans-serif; }
.mark-en { font: 700 36px/40px "Liberation Sans", sans-serif; color: #b4b4b4; }
```
